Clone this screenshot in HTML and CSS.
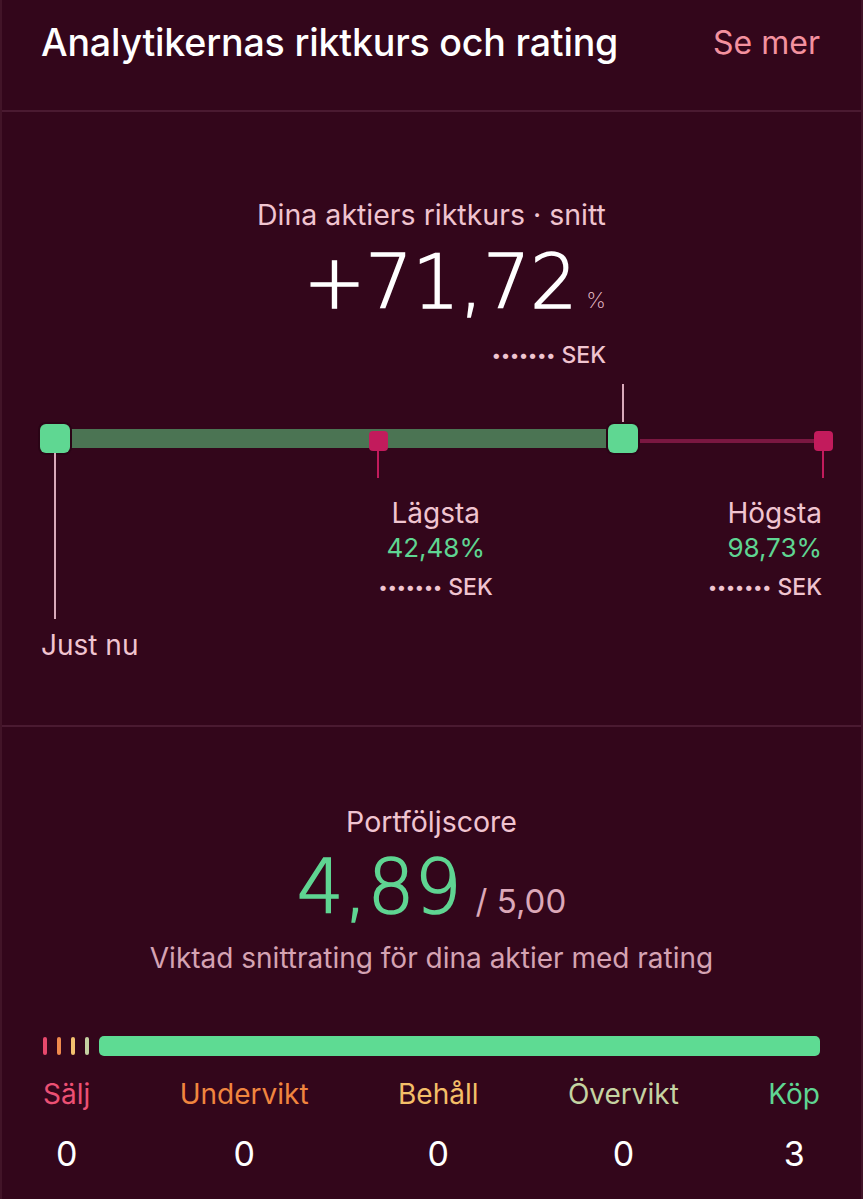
FILE: index.html
```html
<!DOCTYPE html>
<html lang="sv">
<head>
  <meta charset="UTF-8" />
  <title>Analytikernas riktkurs och rating</title>
  <meta name="viewport" content="width=device-width, initial-scale=1" />
  <link rel="stylesheet" href="styles.css">
</head>
<body>

  <div class="card">
    <header class="card-head">
      <h2>Analytikernas riktkurs och rating</h2>
      <a class="more" href="#">Se mer</a>
    </header>

    <section class="target">
      <div class="headline">
        <div class="caption">Dina aktiers riktkurs · snitt</div>
        <div class="big">+71,72<span class="pct">%</span></div>
        <div class="sek"><span class="dots">•••••••</span> SEK</div>
      </div>

      <div class="range">
        <div class="track">
          <span class="fill" style="width: 73.5%"></span>
          <span class="rest" style="left: 73.5%"></span>
          <span class="tick" style="left: 73.5%"></span>
          <span class="knob" style="left: 1.9%"></span>
          <span class="knob" style="left: 73.5%"></span>
          <span class="pin" style="left: 42.7%"></span>
          <span class="pin" style="left: 98.9%"></span>
          <span class="now-line"></span>
        </div>

        <div class="range-labels">
          <div class="point low" style="margin-left: 42.7%">
            <div class="name">Lägsta</div>
            <div class="val">42,48%</div>
            <div class="sek small"><span class="dots">•••••••</span> SEK</div>
          </div>
          <div class="point high">
            <div class="name">Högsta</div>
            <div class="val">98,73%</div>
            <div class="sek small"><span class="dots">•••••••</span> SEK</div>
          </div>
        </div>

        <div class="now">Just nu</div>
      </div>
    </section>

    <section class="score">
      <div class="caption">Portföljscore</div>
      <div class="score-value"><span class="big green">4,89</span><span class="of">/ 5,00</span></div>
      <div class="note">Viktad snittrating för dina aktier med rating</div>

      <div class="dist">
        <span class="dash sell"></span>
        <span class="dash under"></span>
        <span class="dash hold"></span>
        <span class="dash over"></span>
        <span class="dist-bar"></span>
      </div>

      <div class="counts">
        <div class="count"><span class="sell-t">Sälj</span><b>0</b></div>
        <div class="count"><span class="under-t">Undervikt</span><b>0</b></div>
        <div class="count"><span class="hold-t">Behåll</span><b>0</b></div>
        <div class="count"><span class="over-t">Övervikt</span><b>0</b></div>
        <div class="count"><span class="buy-t">Köp</span><b>3</b></div>
      </div>
    </section>
  </div>

</body>
</html>
```

FILE: styles.css
```css
body {
  margin: 0;
  background: #33061b;
  color: #fff;
  font-family: Inter, 'Noto Sans', sans-serif;
}
.card {
  min-height: 1199px;
  border-left: 2px solid #421428;
  border-right: 2px solid #421428;
}
.card-head {
  display: flex;
  justify-content: space-between;
  align-items: center;
  height: 110px;
  padding: 0 41px 0 39px;
  border-bottom: 2px solid #4a1a31;
}
.card-head h2 {
  margin: 0 0 26px;
  font-size: 37.6px;
  font-weight: 500;
  letter-spacing: -0.2px;
}
.more {
  margin-bottom: 26px;
  color: #f3919f;
  font-size: 32px;
  text-decoration: none;
}

.target {
  padding-top: 86px;
  border-bottom: 2px solid #4a1a31;
  height: 527px;
}
.headline {
  display: flex;
  flex-direction: column;
  align-items: flex-end;
  width: max-content;
  margin: 0 auto;
}
.caption {
  color: #f0c4d0;
  font-size: 28.5px;
  line-height: 34px;
}
.big {
  font-family: 'DejaVu Sans', sans-serif;
  font-weight: 200;
  font-size: 74px;
  line-height: 80px;
  -webkit-text-stroke: 1.6px currentColor;
}
.target .big {
  margin-top: 10px;
}
.pct {
  font-family: Inter, sans-serif;
  font-size: 22px;
  color: #f0c4d0;
  margin-left: 9px;
  -webkit-text-stroke: 0;
}
.sek {
  color: #f0c4d0;
  font-size: 23px;
  font-weight: 500;
  margin-top: 1px;
}
.dots {
  font-size: 17px;
  vertical-align: 2px;
}

.range {
  position: relative;
  margin: 15px 28px 0 38px;
}
.track {
  position: relative;
  height: 97px;
}
.track span {
  position: absolute;
}
.fill {
  left: 15px;
  top: 45px;
  height: 19px;
  background: #4b7453;
}
.rest {
  top: 55px;
  right: 9px;
  height: 4px;
  background: #7a1741;
}
.tick {
  top: 0;
  width: 2px;
  height: 40px;
  margin-left: -1px;
  background: #d9a9ba;
}
.knob {
  top: 40px;
  width: 30px;
  height: 29px;
  margin-left: -15px;
  border-radius: 6px;
  background: #5fd792;
  box-shadow: 0 0 0 2px #2a0416;
}
.pin {
  top: 47px;
  width: 19px;
  height: 20px;
  margin-left: -10px;
  border-radius: 4px;
  background: #c21b5c;
}
.pin::after {
  content: "";
  position: absolute;
  left: 8px;
  top: 20px;
  width: 2px;
  height: 27px;
  background: #c21b5c;
}
.now-line {
  left: 14px;
  top: 69px;
  width: 2px;
  height: 166px;
  background: #d9a9ba;
}

.range-labels {
  display: flex;
  margin-top: 15px;
}
.point {
  display: flex;
  flex-direction: column;
}
.low {
  align-items: center;
}
.high {
  align-items: flex-end;
  margin-left: auto;
  margin-right: 11px;
}
.name {
  color: #f0c4d0;
  font-size: 28px;
  line-height: 34px;
}
.val {
  color: #5fd592;
  font-size: 26px;
  line-height: 32px;
  margin-top: 2px;
}
.sek.small {
  margin-top: 9px;
}
.now {
  margin-top: 27px;
  margin-left: 1px;
  color: #f0c4d0;
  font-size: 28px;
  line-height: 34px;
}

.score {
  display: flex;
  flex-direction: column;
  align-items: center;
  padding: 78px 41px 0;
}
.score-value {
  display: flex;
  align-items: baseline;
  margin-top: 8px;
}
.green {
  color: #5fd592;
}
.of {
  color: #dca8b8;
  font-size: 33px;
  margin-left: 14px;
}
.note {
  color: #d5a3b3;
  font-size: 28px;
  margin-top: 14px;
}
.dist {
  display: flex;
  align-self: stretch;
  align-items: center;
  gap: 10px;
  margin-top: 61px;
}
.dash {
  width: 4px;
  height: 18px;
  border-radius: 2px;
}
.sell { background: #e8486c; }
.under { background: #ef8a4d; }
.hold { background: #f3c06f; }
.over { background: #c4d0a1; }
.dist-bar {
  flex: 1;
  height: 20px;
  margin-left: 0;
  border-radius: 5px;
  background: #5edb93;
}
.counts {
  display: flex;
  justify-content: space-between;
  align-self: stretch;
  margin-top: 21px;
}
.count {
  display: flex;
  flex-direction: column;
  align-items: center;
  font-size: 28px;
}
.count b {
  color: #fff;
  font-weight: 400;
  font-size: 34px;
  margin-top: 22px;
}
.sell-t { color: #ec5074; }
.under-t { color: #f0853f; }
.hold-t { color: #f4be68; }
.over-t { color: #c5d3a2; }
.buy-t { color: #5fd592; }
```
